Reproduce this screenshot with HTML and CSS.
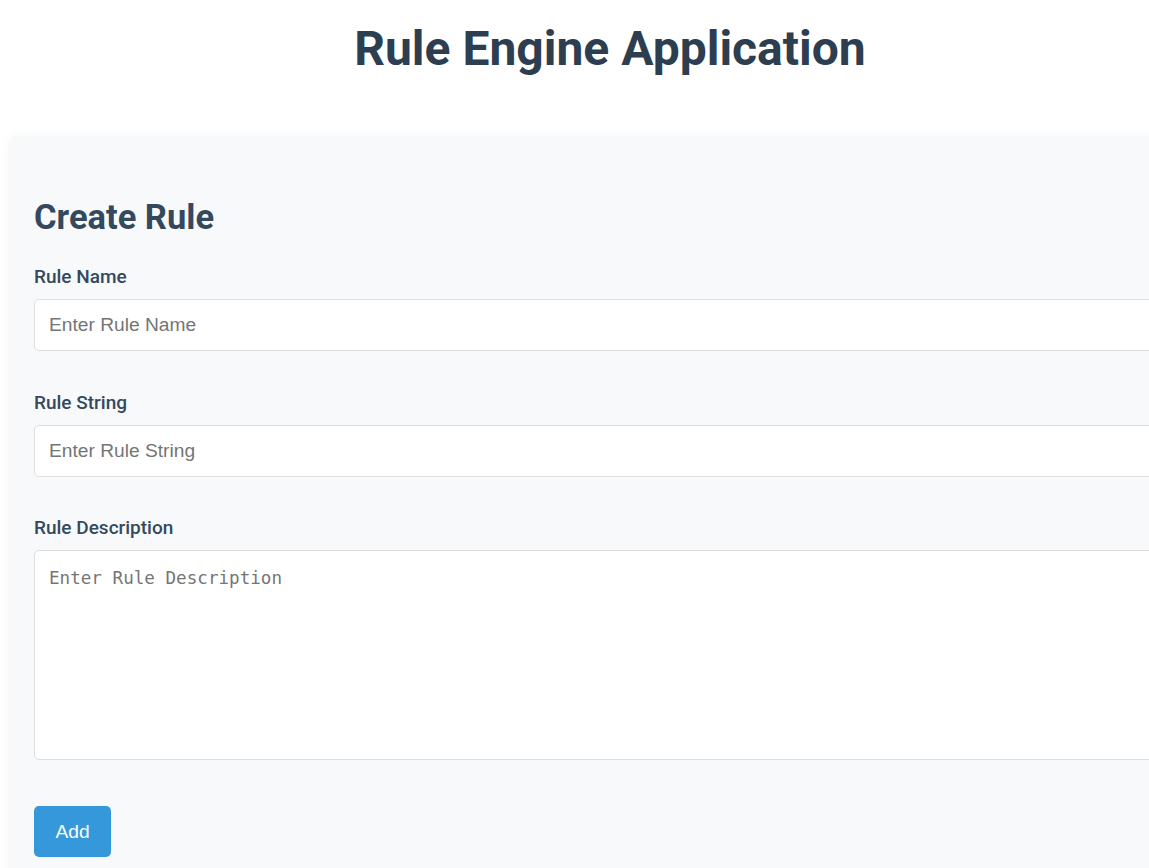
FILE: index.html
```html
<!DOCTYPE html>
<html lang="en">
<head>
<meta charset="utf-8">
<title>Rule Engine Application</title>
<link rel="stylesheet" href="styles.css">
</head>
<body>
<div class="app">
  <h1 class="app-title">Rule Engine Application</h1>
  <section class="card">
    <h2 class="card-title">Create Rule</h2>
    <form class="rule-form">
      <div class="field">
        <label class="field-label" for="rule-name">Rule Name</label>
        <input class="field-input" id="rule-name" type="text" placeholder="Enter Rule Name">
      </div>
      <div class="field">
        <label class="field-label" for="rule-string">Rule String</label>
        <input class="field-input" id="rule-string" type="text" placeholder="Enter Rule String">
      </div>
      <div class="field">
        <label class="field-label" for="rule-desc">Rule Description</label>
        <textarea class="field-textarea" id="rule-desc" placeholder="Enter Rule Description"></textarea>
      </div>
      <button class="btn-add" type="button">Add</button>
    </form>
  </section>
</div>
</body>
</html>
```

FILE: styles.css
```css
html, body {
  margin: 0;
  padding: 0;
  background: #ffffff;
  overflow-x: hidden;
}

body {
  font-family: Roboto, "Liberation Sans", Arial, sans-serif;
}

.app {
  width: 1202px;
  margin-left: 9px;
  padding-top: 20px;
}

.app-title {
  margin: 0 0 59px;
  text-align: center;
  font-size: 48px;
  font-weight: 700;
  color: #2c3e50;
}

.card {
  background: #f8f9fa;
  border-radius: 10px;
  box-shadow: 0 0 10px rgba(0, 0, 0, 0.05);
  padding: 25px;
  min-height: 800px;
}

.card-title {
  margin: 36px 0 28px;
  font-size: 34.5px;
  font-weight: 700;
  color: #34495e;
}

.rule-form {
  display: flex;
  flex-direction: column;
  align-items: flex-start;
}

.field {
  align-self: stretch;
  display: flex;
  flex-direction: column;
  margin-bottom: 39.5px;
}

.field:last-of-type {
  margin-bottom: 46px;
}

.field-label {
  font-size: 19px;
  font-weight: 500;
  color: #34495e;
  margin-bottom: 11px;
}

.field-input,
.field-textarea {
  box-sizing: border-box;
  width: 100%;
  border: 1px solid #dddddd;
  border-radius: 5px;
  background: #ffffff;
  padding: 14px;
  margin: 0;
  color: #333;
}

.field-input {
  height: 52px;
  font-family: "Liberation Sans", Arial, sans-serif;
  font-size: 19.2px;
}

.field-textarea {
  height: 210px;
  padding-top: 17px;
  resize: vertical;
  font-family: "DejaVu Sans Mono", monospace;
  font-size: 17.6px;
}

.field-input::placeholder,
.field-textarea::placeholder {
  color: #757575;
}

.btn-add {
  background: #3498db;
  color: #ffffff;
  border: none;
  border-radius: 5px;
  padding: 14.5px 21.5px;
  font-family: "Liberation Sans", Arial, sans-serif;
  font-size: 19.2px;
  line-height: 22px;
  cursor: pointer;
}
```
